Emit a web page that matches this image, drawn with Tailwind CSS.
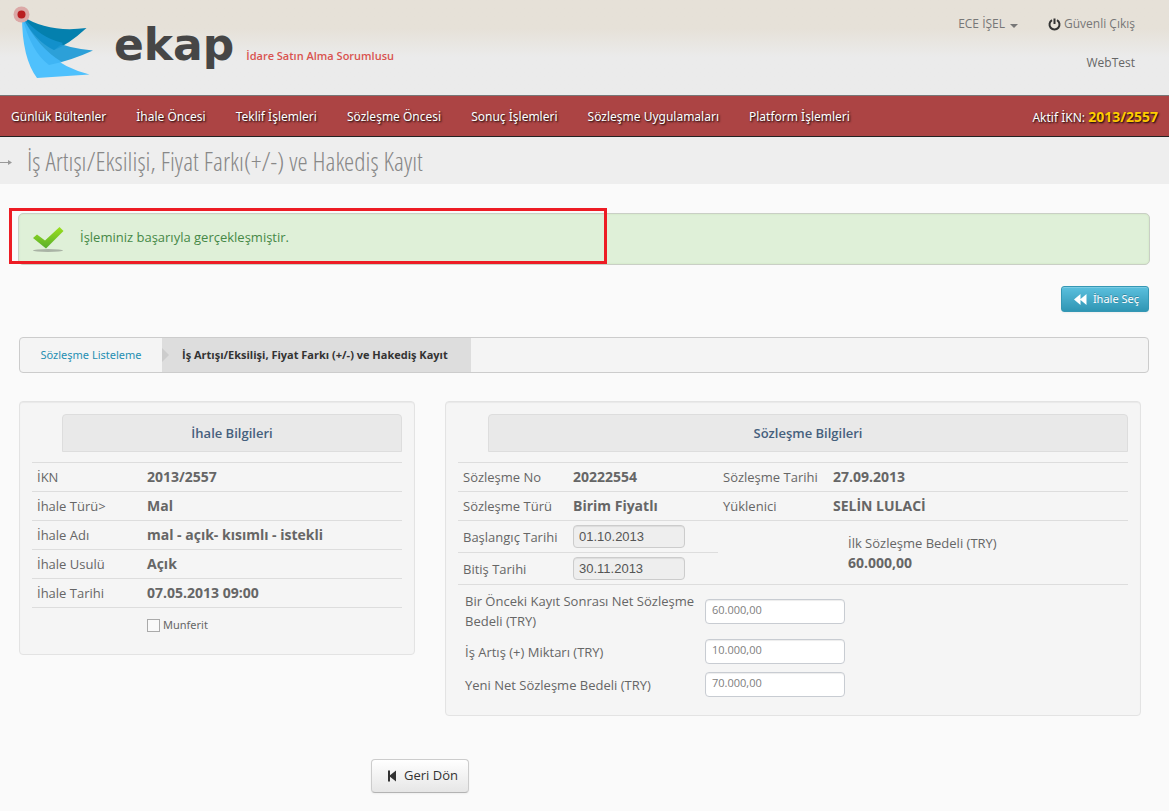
<!DOCTYPE html>
<html lang="tr">
<head>
<meta charset="utf-8">
<title>EKAP</title>
<script src="https://cdn.jsdelivr.net/npm/@tailwindcss/browser@4"></script>
</head>
<body class="relative min-h-screen bg-[#fafafa] font-['Open_Sans','Noto_Sans',sans-serif] text-[13px] text-[#666]">
<header class="flex h-[95px] justify-between bg-linear-to-b from-[#e6e1d8] from-30% to-[#ebebeb] to-60% pr-[34px]">
  <a href="#" class="flex pl-[13px] pt-[6px]">
    <svg class="h-[74px] w-[82px]" viewBox="13 6 82 74" aria-hidden="true">
      <path d="M22 16 Q48 33 86.500 28 Q68 45 54 50 Q36 42 22 16Z" fill="#0480ae"/>
      <path d="M22 16 Q42 46 93 50.500 Q70 61 49 65 Q30 52 22 16Z" fill="#1d9ad6" fill-opacity=".93"/>
      <path d="M22 16 Q40 38 63 43 L54 50 Q34 40 22 16Z" fill="#1290cb"/>
      <path d="M22 16 Q40 62 89.500 74.500 L37 78 Q22 58 22 16Z" fill="#4fc1fd"/>
      <path d="M22 16 Q38 48 62 62 L49 65 Q31 52 22 16Z" fill="#3fb5f5"/>
      <circle cx="21.500" cy="14.500" r="8" fill="#dba8a6"/>
      <circle cx="21.500" cy="14.500" r="4" fill="#b91d20"/>
    </svg>
    <span class="ml-[19px] mt-[14px] font-['DejaVu_Sans'] text-[44px] leading-[50px] font-bold text-[#464646]">ekap</span>
    <span class="ml-[12px] mt-[42px] text-[11px] leading-4 font-semibold text-[#d9534f]">İdare Satın Alma Sorumlusu</span>
  </a>
  <div class="flex flex-col items-end pt-[14px] text-[12px] text-[#777]">
    <div class="flex gap-[30px] leading-5">
      <button type="button" class="flex items-center gap-[5px]">ECE İŞEL <span class="mt-1 border-x-4 border-t-4 border-x-transparent border-t-[#777]"></span></button>
      <a href="#" class="flex items-center gap-[3px]">
        <svg class="size-[13px]" viewBox="0 0 13 13" fill="none" stroke="#333" stroke-width="2" aria-hidden="true"><path d="M4 2.200A5 5 0 1 0 9 2.200M6.500 0.500V6"/></svg>
        Güvenli Çıkış</a>
    </div>
    <span class="mt-[19px] leading-5 text-[#666]">WebTest</span>
  </div>
</header>
<nav class="flex h-[42px] items-center justify-between border-t border-b border-t-[#777] border-b-[#222] bg-[#ac4444] px-[11px] pt-px font-['Noto_Sans'] text-[12px] text-white [text-shadow:1px_1px_2px_#000]">
  <div class="flex gap-[30px]">
    <a href="#">Günlük Bültenler</a><a href="#">İhale Öncesi</a><a href="#">Teklif İşlemleri</a><a href="#">Sözleşme Öncesi</a><a href="#">Sonuç İşlemleri</a><a href="#">Sözleşme Uygulamaları</a><a href="#">Platform İşlemleri</a>
  </div>
  <span>Aktif İKN: <b class="text-[14px] text-[#fc0]">2013/2557</b></span>
</nav>
<div class="flex h-[47px] items-center bg-[#eee] text-[#888]">
  <svg class="mt-1 h-[7px] w-[13px]" viewBox="0 0 13 7" aria-hidden="true"><path d="M0 3.500H10" stroke="#999"/><path d="M8 1L12 3.500L8 6Z" fill="#999"/></svg>
  <h1 class="ml-[14px] font-['Open_Sans_Condensed_Light','Open_Sans_Condensed',sans-serif] text-[26px] leading-[40px]">İş Artışı/Eksilişi, Fiyat Farkı(+/-) ve Hakediş Kayıt</h1>
</div>
<main class="pr-[19px] pl-[18px] pt-[29px]">
  <div role="status" class="flex h-[52px] items-center rounded-[5px] border border-[#c9cfc5] bg-[#dff0d8] pb-[2px] pl-[13px] text-[#468847] shadow-[inset_0_0_2px_#c9dfb8]">
    <svg class="mt-[2px] h-[27px] w-[32px]" viewBox="0 0 32 27" aria-hidden="true">
      <defs><linearGradient id="g" x2="0" y2="1"><stop stop-color="#9be01c"/><stop offset="1" stop-color="#58ae2c"/></linearGradient></defs>
      <ellipse cx="16" cy="24.500" rx="15" ry="1.500" fill="#a9b3a5"/>
      <path d="M1 12L5 8.500L13 14.500L27.500 1L31.500 5L14 22.500Z" fill="url(#g)"/>
    </svg>
    <p class="ml-[16px]">İşleminiz başarıyla gerçekleşmiştir.</p>
  </div>
  <div class="mt-[21px] flex justify-end pr-px">
    <button type="button" class="flex h-[26px] items-center gap-[6px] rounded-[3px] border border-[#3597b4] bg-linear-to-b from-[#5bc0de] to-[#2f96b4] pr-[9px] pl-[12px] font-['Noto_Sans'] text-[11px] text-white shadow-[inset_0_1px_0_#ffffff33,0_1px_2px_#0000000d] [text-shadow:0_-1px_0_#00000040]">
      <svg class="h-[11px] w-[13px]" viewBox="0 0 13 11" fill="#fff" aria-hidden="true"><path d="M6.500 0V11L0 5.500ZM12.500 0V11L6 5.500Z"/></svg>İhale Seç</button>
  </div>
  <ol class="mr-px ml-px mt-[25px] flex h-[36px] overflow-hidden rounded border border-[#ccc] bg-[#f4f4f4] text-[11px] leading-[34px]">
    <li class="w-[142px] text-center font-['Noto_Sans'] text-[#1f8fb2]"><a href="#">Sözleşme Listeleme</a></li>
    <li class="flex w-[309px] items-center bg-[#ddd] font-bold text-[#333]"><span class="border-y-[7px] border-l-[7px] border-y-transparent border-l-[#ccc]"></span><span class="ml-[13px] whitespace-nowrap">İş Artışı/Eksilişi, Fiyat Farkı (+/-) ve Hakediş Kayıt</span></li>
  </ol>
  <div class="mr-[9px] ml-px mt-[28px] grid grid-cols-[396px_1fr] items-start gap-[30px]">
    <section class="rounded border border-[#e3e3e3] bg-[#f5f5f5] p-3 pb-[19px] shadow-[inset_0_1px_1px_#0000000d]">
      <h2 class="ml-[30px] mb-[10px] h-[38px] rounded-t border border-[#ddd] bg-[#e9e9e9] text-center leading-[36px] font-semibold text-[#45607d]">İhale Bilgileri</h2>
      <table class="w-full table-fixed border-b border-[#ddd] text-left leading-5">
        <tbody class="[&_td]:text-[14px] [&_td]:font-bold [&_th]:w-[115px] [&_th]:pl-[5px] [&_th]:font-normal [&_tr]:h-[29px] [&_tr]:border-t [&_tr]:border-[#ddd]">
          <tr><th>İKN</th><td>2013/2557</td></tr>
          <tr><th>İhale Türü&gt;</th><td>Mal</td></tr>
          <tr><th>İhale Adı</th><td>mal - açık- kısımlı - istekli</td></tr>
          <tr><th>İhale Usulü</th><td>Açık</td></tr>
          <tr><th>İhale Tarihi</th><td>07.05.2013 09:00</td></tr>
        </tbody>
      </table>
      <label class="mt-[7px] ml-[115px] flex items-center gap-[3px] font-['Noto_Sans'] text-[11px] leading-5"><input type="checkbox" class="size-[13px] appearance-none border border-[#aaa] bg-[#f9f9f9] checked:bg-[#468847]">Munferit</label>
    </section>
    <section class="rounded border border-[#e3e3e3] bg-[#f5f5f5] p-3 pb-[18px] shadow-[inset_0_1px_1px_#0000000d]">
      <h2 class="ml-[30px] mb-[10px] h-[38px] rounded-t border border-[#ddd] bg-[#e9e9e9] text-center leading-[36px] font-semibold text-[#45607d]">Sözleşme Bilgileri</h2>
      <table class="w-full table-fixed text-left leading-5">
        <colgroup><col class="w-[115px]"><col class="w-[145px]"><col class="w-[115px]"><col></colgroup>
        <tbody class="[&_td]:border-y [&_td]:border-[#ddd] [&_th]:border-y [&_th]:border-[#ddd] [&_th]:pl-[5px] [&_th]:font-normal">
          <tr class="h-[29px]"><th>Sözleşme No</th><td class="text-[14px] font-bold">20222554</td><th>Sözleşme Tarihi</th><td class="text-[14px] font-bold">27.09.2013</td></tr>
          <tr class="h-[29px]"><th>Sözleşme Türü</th><td class="text-[14px] font-bold">Birim Fiyatlı</td><th>Yüklenici</th><td class="text-[14px] font-bold">SELİN LULACİ</td></tr>
          <tr class="h-[32px]"><th><label for="bas">Başlangıç Tarihi</label></th><td><input id="bas" readonly value="01.10.2013" class="block h-[23px] w-[112px] rounded border border-[#ccc] bg-[#eee] px-[5px] font-['Liberation_Sans'] text-[13px] text-[#555] shadow-[inset_0_1px_1px_#00000013]"></td><td colspan="2" rowspan="2" class="pl-[130px]">İlk Sözleşme Bedeli (TRY)<br><b class="text-[14px]">60.000,00</b></td></tr>
          <tr class="h-[32px]"><th><label for="bit">Bitiş Tarihi</label></th><td><input id="bit" readonly value="30.11.2013" class="block h-[23px] w-[112px] rounded border border-[#ccc] bg-[#eee] px-[5px] font-['Liberation_Sans'] text-[13px] text-[#555] shadow-[inset_0_1px_1px_#00000013]"></td></tr>
        </tbody>
      </table>
      <div class="mt-[6px] ml-[7px] flex flex-col gap-2 leading-5">
        <div class="flex items-center"><label for="n1" class="w-[240px]">Bir Önceki Kayıt Sonrası Net Sözleşme Bedeli (TRY)</label><input id="n1" value="60.000,00" class="h-[25px] w-[140px] rounded border border-[#c8ccd2] bg-white px-[6px] pb-[4px] text-[11px] text-[#808080] shadow-[inset_0_1px_1px_#00000013]"></div>
        <div class="flex h-[25px] items-center"><label for="n2" class="w-[240px]">İş Artış (+) Miktarı (TRY)</label><input id="n2" value="10.000,00" class="h-[25px] w-[140px] rounded border border-[#c8ccd2] bg-white px-[6px] pb-[4px] text-[11px] text-[#808080] shadow-[inset_0_1px_1px_#00000013]"></div>
        <div class="flex h-[25px] items-center"><label for="n3" class="w-[240px]">Yeni Net Sözleşme Bedeli (TRY)</label><input id="n3" value="70.000,00" class="h-[25px] w-[140px] rounded border border-[#c8ccd2] bg-white px-[6px] pb-[4px] text-[11px] text-[#808080] shadow-[inset_0_1px_1px_#00000013]"></div>
      </div>
    </section>
  </div>
  <button type="button" class="mt-[43px] mb-[17px] ml-[353px] flex h-[34px] items-center gap-[7px] rounded border border-[#ccc] border-b-[#b3b3b3] bg-linear-to-b from-white to-[#e6e6e6] pr-[10px] pl-[15px] text-[13px] text-[#333] shadow-[0_1px_2px_#0000000d]">
    <svg class="h-[12px] w-[10px]" viewBox="0 0 10 12" fill="#333" aria-hidden="true"><path d="M1 0.500H3V5.200L9 0.500V11.500L3 6.800V11.500H1Z"/></svg>Geri Dön</button>
</main>
<div class="pointer-events-none absolute top-[208px] left-[9px] h-[56px] w-[598px] border-3 border-[#ed1c24]"></div>
</body>
</html>
